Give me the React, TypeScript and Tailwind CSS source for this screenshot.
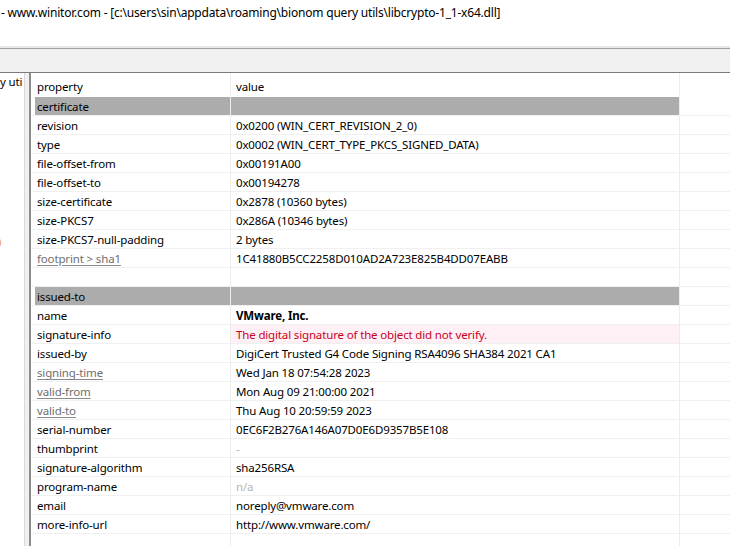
const font = { fontFamily: '"Noto Sans", "Segoe UI", sans-serif' };

type Row = {
  k?: string;
  v?: string;
  kind?: "group" | "link" | "bold" | "error" | "muted" | "blank";
};

const rows: Row[] = [
  { k: "certificate", kind: "group" },
  { k: "revision", v: "0x0200 (WIN_CERT_REVISION_2_0)" },
  { k: "type", v: "0x0002 (WIN_CERT_TYPE_PKCS_SIGNED_DATA)" },
  { k: "file-offset-from", v: "0x00191A00" },
  { k: "file-offset-to", v: "0x00194278" },
  { k: "size-certificate", v: "0x2878 (10360 bytes)" },
  { k: "size-PKCS7", v: "0x286A (10346 bytes)" },
  { k: "size-PKCS7-null-padding", v: "2 bytes" },
  { k: "footprint > sha1", v: "1C41880B5CC2258D010AD2A723E825B4DD07EABB", kind: "link" },
  { kind: "blank" },
  { k: "issued-to", kind: "group" },
  { k: "name", v: "VMware, Inc.", kind: "bold" },
  { k: "signature-info", v: "The digital signature of the object did not verify.", kind: "error" },
  { k: "issued-by", v: "DigiCert Trusted G4 Code Signing RSA4096 SHA384 2021 CA1" },
  { k: "signing-time", v: "Wed Jan 18 07:54:28 2023", kind: "link" },
  { k: "valid-from", v: "Mon Aug 09 21:00:00 2021", kind: "link" },
  { k: "valid-to", v: "Thu Aug 10 20:59:59 2023", kind: "link" },
  { k: "serial-number", v: "0EC6F2B276A146A07D0E6D9357B5E108" },
  { k: "thumbprint", v: "-", kind: "muted" },
  { k: "signature-algorithm", v: "sha256RSA" },
  { k: "program-name", v: "n/a", kind: "muted" },
  { k: "email", v: "noreply@vmware.com" },
  { k: "more-info-url", v: "http://www.vmware.com/" },
  { kind: "blank" },
];

function TableRow({ r }: { r: Row }) {
  const group = r.kind === "group";
  const keyCls =
    r.kind === "link" ? "text-[#6e6e6e] underline underline-offset-2 decoration-[#8a8a8a]" : "text-black";
  let valCls = "text-black";
  if (r.kind === "bold") valCls = "text-black font-bold";
  if (r.kind === "error") valCls = "text-[#c8001e] bg-[#fff0f5]";
  if (r.kind === "muted") valCls = "text-[#b4b4b4]";
  return (
    <div className="flex h-[19px] border-b border-[#f0f0f0]">
      <div className="w-[4px] shrink-0" />
      <div
        className={`w-[196px] shrink-0 border-r border-[#ececec] pl-[2px] pt-[2px] flex items-center whitespace-nowrap overflow-hidden ${
          group ? "bg-[#acacac]" : ""
        }`}
      >
        <span className={keyCls}>{r.k}</span>
      </div>
      <div
        className={`w-[449px] shrink-0 border-r border-[#ececec] pl-[5px] pt-[2px] flex items-center whitespace-nowrap overflow-hidden ${
          group ? "bg-[#acacac]" : valCls
        }`}
      >
        {r.v}
      </div>
      <div className="flex-1" />
    </div>
  );
}

export default function App() {
  return (
    <div
      className="w-[730px] h-[546px] overflow-hidden bg-white text-[11.5px] tracking-[-0.15px] leading-none flex flex-col"
      style={font}
    >
      <div className="h-[46px] shrink-0 bg-white pt-[7px] pl-[1px] text-[12px] tracking-[-0.2px] text-black whitespace-nowrap">
        - www.winitor.com - [c:\users\sin\appdata\roaming\bionom query utils\libcrypto-1_1-x64.dll]
      </div>
      <div className="h-[2px] shrink-0 bg-[#e8e8e8]" />
      <div className="h-[25px] shrink-0 bg-[#f0f0f0] border-t border-[#a0a0a0] border-b border-b-[#7a7a7a]" />
      <div className="flex-1 flex min-h-0">
        <div className="w-[25px] shrink-0 bg-white border-r border-[#d8d8d8] relative overflow-hidden">
          <div className="pt-[3px] whitespace-nowrap text-black">y uti</div>
          <div className="absolute left-[-2px] top-[163px] text-[#e8900c] text-[11px] leading-none">)</div>
        </div>
        <div className="w-[4px] shrink-0 bg-[#f0f0f0]" />
        <div className="flex-1 min-w-0 border-l-2 border-[#8c8c8c] bg-white overflow-hidden">
          <div className="flex h-[24px]">
            <div className="w-[4px] shrink-0" />
            <div className="w-[196px] shrink-0 border-r border-[#ececec] pl-[2px] pt-[3px] flex items-center">property</div>
            <div className="w-[449px] shrink-0 border-r border-[#ececec] pl-[5px] pt-[3px] flex items-center">value</div>
            <div className="flex-1" />
          </div>
          {rows.map((r, i) => (
            <TableRow key={i} r={r} />
          ))}
        </div>
      </div>
    </div>
  );
}
